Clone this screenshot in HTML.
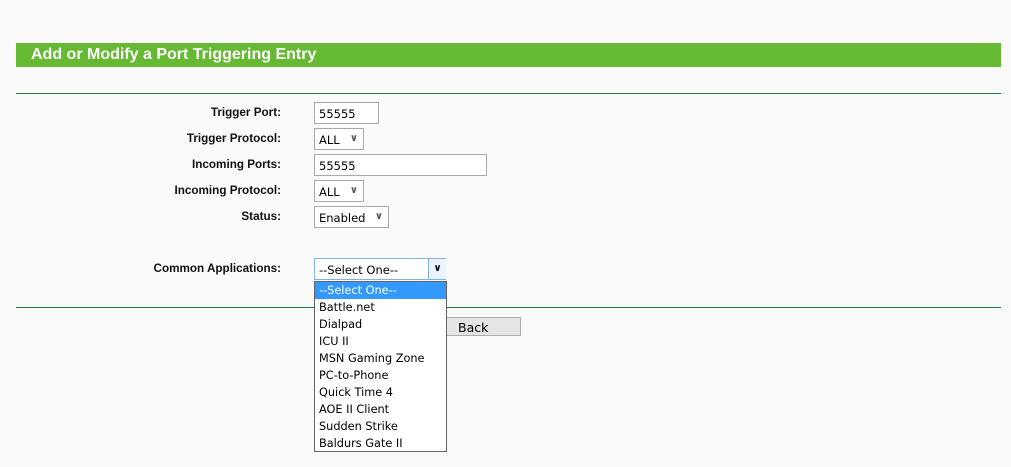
<!DOCTYPE html><html><head><style>
body{margin:0;width:1011px;height:467px;background:#fafafa;position:relative;overflow:hidden;font-family:"Liberation Sans",Arial,sans-serif}
.a{position:absolute}
.lbl{position:absolute;right:730px;font-size:11.7px;font-weight:bold;color:#111}
.box{position:absolute;border:1px solid #a9a9a9;background:#fff;font-family:"DejaVu Sans",sans-serif;font-size:11.5px;color:#000;box-sizing:border-box;line-height:19px;padding-left:4px}
.arr{position:absolute;right:5px;top:0;font-size:10px;font-weight:bold;color:#555}
.item{height:17px;line-height:18px;padding-left:4px;font-family:"DejaVu Sans",sans-serif;font-size:11.3px}
</style></head><body>
<div class="a" style="left:16px;top:43px;width:985px;height:24px;background:#66b933"></div>
<div class="a" style="left:31px;top:46px;color:#fff;font-weight:bold;font-size:16px">Add or Modify a Port Triggering Entry</div>
<div class="a" style="left:16px;top:93px;width:985px;height:1px;background:#1f7a45"></div>
<div class="a" style="left:16px;top:307px;width:985px;height:1px;background:#1f7a45"></div>
<div class="lbl" style="top:106px">Trigger Port:</div>
<div class="lbl" style="top:132px">Trigger Protocol:</div>
<div class="lbl" style="top:158px">Incoming Ports:</div>
<div class="lbl" style="top:184px">Incoming Protocol:</div>
<div class="lbl" style="top:210px">Status:</div>
<div class="lbl" style="top:262px">Common Applications:</div>
<div class="box" style="left:314px;top:102px;width:65px;height:22px;line-height:23px">55555</div>
<div class="box" style="left:314px;top:128px;width:50px;height:22px;line-height:23px">ALL<span class="arr" style="line-height:20px">&#8744;</span></div>
<div class="box" style="left:314px;top:154px;width:173px;height:22px;line-height:23px">55555</div>
<div class="box" style="left:314px;top:180px;width:50px;height:22px;line-height:23px">ALL<span class="arr" style="line-height:20px">&#8744;</span></div>
<div class="box" style="left:314px;top:206px;width:75px;height:22px;line-height:23px">Enabled<span class="arr" style="line-height:20px">&#8744;</span></div>
<div class="box" style="left:314px;top:258px;width:132px;height:22px;line-height:23px;border-color:#7eb4ea">--Select One--<span class="a" style="left:113px;top:0;width:17px;height:20px;border-left:1px solid #7eb4ea;background:#eaf3fc;text-align:center;font-size:10px;font-weight:bold;line-height:20px">&#8744;</span></div>
<div class="a" style="left:442px;top:317px;width:79px;height:19px;border:1px solid #adadad;background:#e5e5e5;box-sizing:border-box;font-size:12.5px;font-family:'DejaVu Sans',sans-serif;line-height:19px;padding-left:15px">Back</div>
<div class="a" style="left:314px;top:281px;width:133px;height:171px;border:1px solid #646464;background:#fff;box-sizing:border-box">
<div class="item" style="background:#3399ff;color:#fff">--Select One--</div>
<div class="item">Battle.net</div><div class="item">Dialpad</div><div class="item">ICU II</div><div class="item">MSN Gaming Zone</div><div class="item">PC-to-Phone</div><div class="item">Quick Time 4</div><div class="item">AOE II Client</div><div class="item">Sudden Strike</div><div class="item">Baldurs Gate II</div>
</div>
</body></html>
